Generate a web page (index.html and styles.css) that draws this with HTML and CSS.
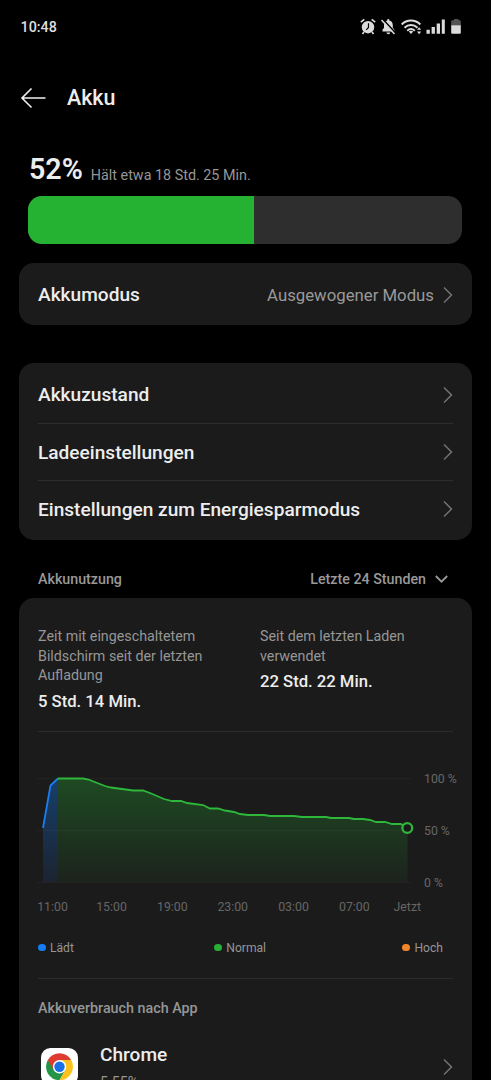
FILE: index.html
```html
<!DOCTYPE html>
<html lang="de">
<head>
<meta charset="utf-8">
<title>Akku</title>
<link rel="stylesheet" href="styles.css">
</head>
<body>
<div class="screen">
  <div class="status">
    <span class="clock">10:48</span>
    <svg class="status-icons" width="104" height="20" viewBox="0 0 104 20" fill="#dcdcdc">
      <g>
        <circle cx="8" cy="10.2" r="6.2"/>
        <path d="M.8 5.2 4.3 2.3M15.2 5.2l-3.5-2.9M4 15l-1.5 2M12 15l1.500 2" stroke="#dcdcdc" stroke-width="1.700"/>
        <path d="M8.500 6.300v4.200L6.200 12.800" stroke="#000" stroke-width="1.200" fill="none"/>
      </g>
      <g>
        <path d="M22.500 14.600V12.500l1.500-1.500V8c0-2.500 1.600-4.100 3.300-4.500V3c0-1.200 2-1.200 2 0v.5c2.200.5 3.500 2.200 3.500 4.500v3l1.500 1.500v2.100zM26.500 15.500h3.700c0 2.200-3.700 2.200-3.700 0z"/>
        <path d="m22.600 2 13 14" stroke="#000" stroke-width="1.700"/>
        <path d="m21.500 3 13 14" stroke="#dcdcdc" stroke-width="1.500"/>
      </g>
      <g fill="none" stroke="#dcdcdc" stroke-width="2">
        <path d="M41.700 7.500c5.200-5.200 13.400-5.200 18.600 0M44.500 10.800c3.800-3.700 9.200-3.700 13 0M47.200 13.700c2.300-2.100 5.300-2.100 7.600 0"/>
      </g>
      <path d="m48.800 14.500 2.200 2.500 2.200-2.500c-1.300-1-3.100-1-4.400 0zM57 12.800l2.100-2.600 2.100 2.600zM57 14.600h4.200l-2.100 2.600z"/>
      <path d="M66.500 12.800h3.300v4h-3.300zM71.600 10h3.300v6.800h-3.300zM76.700 6.500H80v10.300h-3.300zM81.800 2.500h3v14.300h-3z"/>
      <path d="M94 2h4.500v1.300h1.300q1 0 1 1V8.500h-9.600V4.300q0-1 1-1H94z" fill="#555"/>
      <path d="M91.200 8.300h9.600v7.500q0 1-1 1h-7.600q-1 0-1-1z"/>
    </svg>
  </div>

  <header class="header">
    <svg width="26" height="22" viewBox="0 0 26 22" fill="none" stroke="#efefef" stroke-width="1.600"><path d="M25.500 11H2M11.500 1.500 2 11l9.500 9.500"/></svg>
    <h1 class="title">Akku</h1>
  </header>

  <div class="charge">
    <span class="percent">52%</span>
    <span class="remaining">Hält etwa 18 Std. 25 Min.</span>
  </div>
  <div class="meter"><div class="meter-fill"></div></div>

  <section class="card mode">
    <div class="row">
      <span class="label">Akkumodus</span>
      <span class="value">Ausgewogener Modus</span>
      <svg class="chevron" viewBox="0 0 10 18"><path d="m1 1.500 7.500 7.500L1 16.500"/></svg>
    </div>
  </section>

  <section class="card menu">
    <div class="row"><span class="label">Akkuzustand</span><svg class="chevron" viewBox="0 0 10 18"><path d="m1 1.500 7.500 7.500L1 16.500"/></svg></div>
    <div class="row"><span class="label">Ladeeinstellungen</span><svg class="chevron" viewBox="0 0 10 18"><path d="m1 1.500 7.500 7.500L1 16.500"/></svg></div>
    <div class="row"><span class="label">Einstellungen zum Energiesparmodus</span><svg class="chevron" viewBox="0 0 10 18"><path d="m1 1.500 7.500 7.500L1 16.500"/></svg></div>
  </section>

  <div class="section-head">
    <span class="usage">Akkunutzung</span>
    <span class="range">Letzte 24 Stunden</span>
    <svg width="13" height="8" viewBox="0 0 13 8" fill="none" stroke="#999" stroke-width="1.800"><path d="m.8 1 5.700 5.700L12.200 1"/></svg>
  </div>

  <section class="card usage-card">
    <div class="stats">
      <div class="stat">
        <p class="stat-text">Zeit mit eingeschaltetem<br>Bildschirm seit der letzten<br>Aufladung</p>
        <p class="stat-value">5 Std. 14 Min.</p>
      </div>
      <div class="stat">
        <p class="stat-text">Seit dem letzten Laden<br>verwendet</p>
        <p class="stat-value">22 Std. 22 Min.</p>
      </div>
    </div>
    <svg class="chart" width="453" height="190" viewBox="19 732 453 190">
      <defs>
        <linearGradient id="green" x1="0" y1="778" x2="0" y2="882" gradientUnits="userSpaceOnUse"><stop offset="0" stop-color="#1e4a22"/><stop offset="1" stop-color="#1c231d"/></linearGradient>
        <linearGradient id="blue" x1="0" y1="778" x2="0" y2="882" gradientUnits="userSpaceOnUse"><stop offset="0" stop-color="#173f6c"/><stop offset="1" stop-color="#1b2430"/></linearGradient>
      </defs>
      <path d="M43 882V828L50.500 785.500 58 778.500V882z" fill="url(#blue)"/>
      <path d="M58 882V778.500H83L88.500 779.500 96 782.500 105 786 111 787.500 133 790.500H143L150 793 164 799 172 801H181L187 803 203 805 210 808.500H218L225 810.500 234 812 240 814 248 815H264L270 816H294L302 817H326L331 818H349L354 819H363L370 820 376 822H385L392 824H401L407.500 828V882z" fill="url(#green)"/>
      <path d="M37 778.500H411M37 830.500H411M37 882.500H411" stroke="#fff" stroke-opacity=".03"/>
      <path d="M43 828 50.500 785.500 58 778.500" fill="none" stroke="#1a7df0" stroke-width="1.800"/>
      <path d="M58 778.500H83L88.500 779.500 96 782.500 105 786 111 787.500 133 790.500H143L150 793 164 799 172 801H181L187 803 203 805 210 808.500H218L225 810.500 234 812 240 814 248 815H264L270 816H294L302 817H326L331 818H349L354 819H363L370 820 376 822H385L392 824H401L403 825.500" fill="none" stroke="#2eb73b" stroke-width="1.800"/>
      <circle cx="407.300" cy="828" r="4.900" fill="#1b1b1b" stroke="#2eb73b" stroke-width="2.300"/>
      <g class="axis">
        <text x="424" y="783.300">100 %</text><text x="424" y="835.300">50 %</text><text x="424" y="887.300">0 %</text>
      </g>
      <g class="axis axis-x">
        <text x="52.500" y="911">11:00</text><text x="111.500" y="911">15:00</text><text x="172.300" y="911">19:00</text><text x="232.700" y="911">23:00</text><text x="293.500" y="911">03:00</text><text x="354.300" y="911">07:00</text><text x="407.300" y="911">Jetzt</text>
      </g>
    </svg>
    <div class="legend">
      <span class="key blue">Lädt</span>
      <span class="key green">Normal</span>
      <span class="key orange">Hoch</span>
    </div>
    <h2 class="apps-head">Akkuverbrauch nach App</h2>
    <div class="app">
      <svg class="app-icon" width="37" height="37" viewBox="0 0 37 37">
        <rect width="37" height="37" rx="9.500" fill="#fff"/>
        <g transform="translate(18.500 18.700)">
          <path d="M-11.690-6.750A13.500 13.500 0 0 1 11.690-6.750H0z" fill="#df3b30"/>
          <path d="M-11.690-6.750A13.500 13.500 0 0 0 0 13.500L5.850 3.380 0 0z" fill="#249547"/>
          <path d="M11.690-6.750A13.500 13.500 0 0 1 0 13.500L5.850 3.380 0-6.750z" fill="#fbc21f"/>
          <path d="M-11.690-6.750-5.850 3.380 0 0V-6.750z" fill="#df3b30"/>
          <circle r="6.700" fill="#fff"/><circle r="5.200" fill="#1a70e6"/>
        </g>
      </svg>
      <div class="app-text"><span class="app-name">Chrome</span><span class="app-share">5.55%</span></div>
      <svg class="chevron" viewBox="0 0 10 18"><path d="m1 1.500 7.500 7.500L1 16.500"/></svg>
    </div>
  </section>
</div>
</body>
</html>
```

FILE: styles.css
```css
* { box-sizing: border-box; }
body { margin: 0; background: #000; font-family: Roboto, "Liberation Sans", sans-serif; color: #ededed; }
h1, h2, p { margin: 0; }
.screen { height: 1080px; overflow: hidden; display: flex; flex-direction: column; }
.status { flex: none; height: 54px; padding: 0 27.5px 0 20.5px; display: flex; align-items: center; justify-content: space-between; }
.clock { font-size: 14.3px; font-weight: 500; color: #dedede; }
.header { flex: none; height: 88px; padding-left: 20px; display: flex; align-items: center; gap: 21px; }
.title { font-size: 21.4px; font-weight: 500; line-height: 24px; }
.charge { flex: none; height: 54px; padding: 9px 28px 0 29px; display: flex; align-items: baseline; gap: 8px; }
.percent { font-size: 28.6px; line-height: 36px; font-weight: 600; }
.remaining { position: relative; top: 1px; font-size: 14.35px; color: #969696; }
.meter { flex: none; height: 48px; margin: 0 29px 0 28px; border-radius: 14px; overflow: hidden; background: #2e2e2e; }
.meter-fill { width: 52%; height: 100%; background: #25b233; }
.card { flex: none; margin: 0 19px; border-radius: 15px; background: #1b1b1b; }
.mode { margin-top: 19px; height: 62px; padding: 0 19px; }
.menu { margin-top: 38px; height: 177px; padding: 3px 19px; }
.row { height: 57px; display: flex; align-items: center; }
.mode .row { height: 63px; }
.menu .row + .row { border-top: 1px solid #2e2e2e; }
.label { flex: 1; font-size: 19.1px; font-weight: 500; }
.value { font-size: 16.75px; color: #999; margin-right: 9px; }
.chevron { flex: none; width: 10px; height: 18px; fill: none; stroke: #737373; stroke-width: 1.5; }
.section-head { flex: none; height: 58px; padding: 20px 43px 0 38px; display: flex; align-items: center; color: #999; font-size: 14.25px; font-weight: 500; }
.usage { flex: 1; }
.range { margin-right: 9px; }
.usage-card { height: 500px; border-radius: 15px 15px 0 0; }
.stats { height: 134px; margin: 0 19px; padding-top: 29px; display: grid; grid-template-columns: 222px 1fr; border-bottom: 1px solid #2c2c2c; }
.stat-text { font-size: 14.27px; line-height: 19.5px; color: #969696; }
.stat-value { margin-top: 6px; font-size: 16.65px; line-height: 20px; font-weight: 500; }
.chart { display: block; }
.axis { font-size: 12.3px; fill: #666; }
.axis-x { text-anchor: middle; }
.legend { height: 57px; margin: 0 19px; padding: 0 10px 5px 0; display: flex; align-items: center; justify-content: space-between; font-size: 12.1px; color: #969696; border-bottom: 1px solid #2c2c2c; }
.key { display: flex; align-items: center; gap: 4.5px; }
.key::before { content: ""; width: 7.5px; height: 7.5px; border-radius: 50%; background: currentColor; }
.green { margin-left: 4px; }
.blue::before { background: #147df5; }
.green::before { background: #27af35; }
.orange::before { background: #f28526; }
.apps-head { margin: 19px 19px 0; font-size: 14.3px; line-height: 20px; font-weight: 500; color: #969696; }
.app { height: 60px; margin: 18.5px 19px 0; padding-left: 3px; display: flex; align-items: center; }
.app-text { flex: 1; margin-left: 22px; padding-top: 2px; display: flex; flex-direction: column; gap: 5px; }
.app-name { font-size: 19.1px; line-height: 24px; font-weight: 500; }
.app-share { font-size: 14.3px; line-height: 20px; color: #969696; }
```
